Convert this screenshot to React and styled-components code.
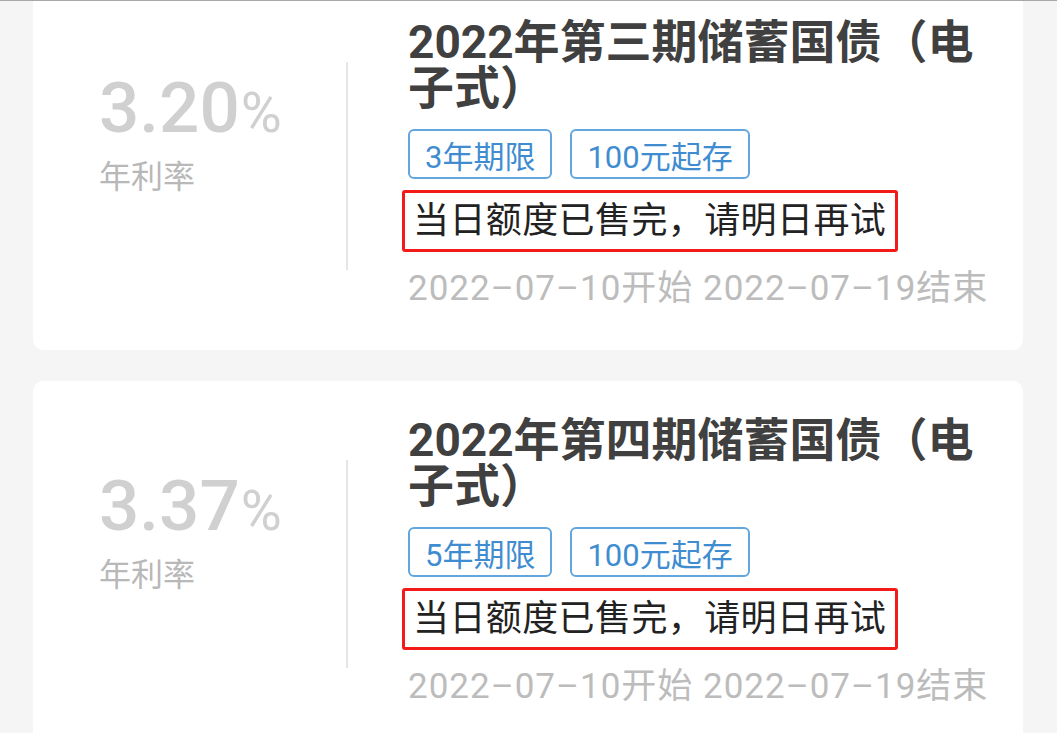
import React from "react";
import styled, { createGlobalStyle } from "styled-components";

const bonds = [
  {
    id: "2022-3",
    name: "2022年第三期储蓄国债（电子式）",
    rate: "3.20",
    term: "3年期限",
    minimum: "100元起存",
    notice: "当日额度已售完，请明日再试",
    start: "2022–07–10",
    end: "2022–07–19",
  },
  {
    id: "2022-4",
    name: "2022年第四期储蓄国债（电子式）",
    rate: "3.37",
    term: "5年期限",
    minimum: "100元起存",
    notice: "当日额度已售完，请明日再试",
    start: "2022–07–10",
    end: "2022–07–19",
  },
];

const GlobalStyle = createGlobalStyle`
  html, body {
    margin: 0;
    padding: 0;
    background: #f5f5f5;
  }
  body {
    font-family: Roboto, "Noto Sans CJK SC", sans-serif;
  }
`;

const BondCard = ({ bond }) => {
  return (
    <Card>
      <RateColumn>
        <Rate>
          {bond.rate}
          <Percent>%</Percent>
        </Rate>
        <RateLabel>年利率</RateLabel>
      </RateColumn>
      <Divider />
      <Info>
        <Title>{bond.name}</Title>
        <Tags>
          <Tag>{bond.term}</Tag>
          <Tag>{bond.minimum}</Tag>
        </Tags>
        <Notice>{bond.notice}</Notice>
        <Dates>
          {bond.start}开始 {bond.end}结束
        </Dates>
      </Info>
    </Card>
  );
};

const App = () => {
  return (
    <Page>
      <GlobalStyle />
      <List>
        {bonds.map((bond) => (
          <BondCard key={bond.id} bond={bond} />
        ))}
      </List>
    </Page>
  );
};

const Page = styled.div`
  height: 733px;
  overflow: hidden;
  border-top: 1px solid #a8a8a8;
  box-sizing: border-box;
  background: #f5f5f5;
`;

const List = styled.div`
  display: flex;
  flex-direction: column;
  gap: 31px;
  margin-top: -18px;
  padding: 0 34px 0 33px;
`;

const Card = styled.div`
  display: flex;
  background: #ffffff;
  border-radius: 10px;
  padding: 36px 34px 38px 66px;
`;

const RateColumn = styled.div`
  width: 247px;
  flex-shrink: 0;
  padding-top: 52px;
`;

const Rate = styled.div`
  font-size: 71px;
  line-height: 73px;
  font-weight: 500;
  color: #d0d0d0;
  white-space: nowrap;
`;

const Percent = styled.span`
  font-size: 56px;
  font-weight: 400;
  margin-left: 1px;
`;

const RateLabel = styled.div`
  margin-top: 8px;
  font-size: 32px;
  line-height: 38px;
  color: #b8b8b8;
`;

const Divider = styled.div`
  align-self: center;
  width: 2px;
  height: 208px;
  background: #e6e6e6;
  flex-shrink: 0;
`;

const Info = styled.div`
  flex: 1;
  margin-left: 60px;
  min-width: 0;
`;

const Title = styled.h2`
  margin: 0;
  font-size: 46px;
  line-height: 46px;
  font-weight: 700;
  color: #404040;
`;

const Tags = styled.div`
  display: flex;
  gap: 18px;
  margin-top: 18px;
`;

const Tag = styled.span`
  box-sizing: border-box;
  height: 50px;
  padding: 0 15px;
  display: inline-flex;
  align-items: center;
  border: 2px solid #62a6dd;
  border-radius: 6px;
  font-size: 31px;
  color: #3f8dd0;
`;

const Notice = styled.div`
  align-self: flex-start;
  display: inline-block;
  margin: 11px 0 0 -6px;
  padding: 0 9px 0 8px;
  height: 62px;
  box-sizing: border-box;
  border: 3px solid #f31a1a;
  border-radius: 3px;
  font-size: 36px;
  line-height: 56px;
  letter-spacing: 0.4px;
  color: #222222;
  white-space: nowrap;
`;

const Dates = styled.div`
  margin-top: 14px;
  font-size: 35px;
  line-height: 46px;
  letter-spacing: 1px;
  color: #bcbcbc;
  white-space: nowrap;
`;

export default App;
